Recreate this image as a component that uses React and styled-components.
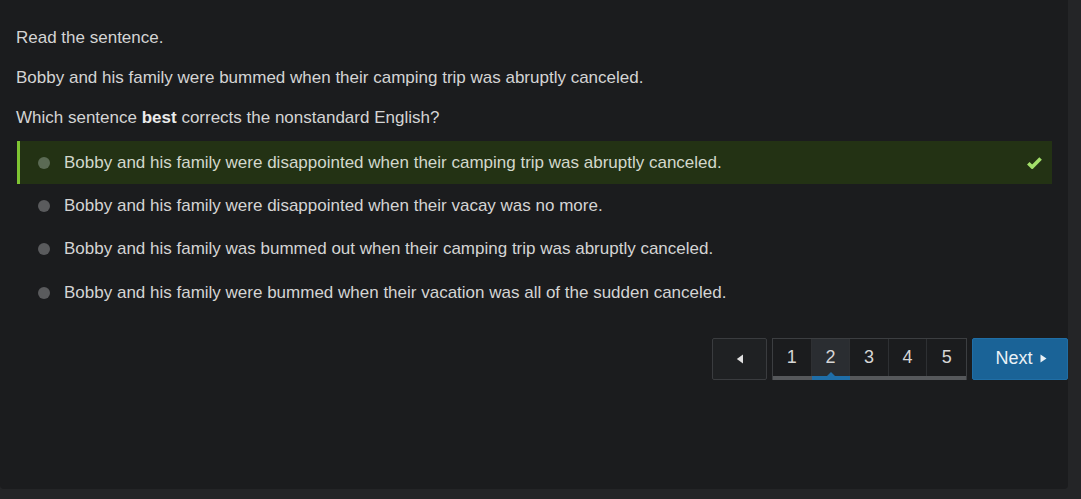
import React from "react";
import styled, { createGlobalStyle } from "styled-components";

const Global = createGlobalStyle`
  html, body { margin: 0; padding: 0; background: #242527; }
  body { font-family: "Liberation Sans", Arial, sans-serif; }
`;

const Panel = styled.div`
  width: 1068px;
  height: 489px;
  box-sizing: border-box;
  background: #1b1c1e;
  border-radius: 0 0 4px 4px;
  padding: 26px 16px 0 16px;
  color: #d4d4d4;
  font-size: 17px;
`;

const Prompt = styled.div`
  display: flex;
  flex-direction: column;
  gap: 16px;
`;

const Para = styled.p`
  margin: 0;
  line-height: 24px;
  b { color: #ececec; font-weight: 700; }
`;

const Options = styled.div`
  margin: 11px 0 0 1px;
  display: flex;
  flex-direction: column;
`;

const Option = styled.div`
  display: flex;
  align-items: center;
  height: ${p => (p.$first ? 43 : 43.5)}px;
  box-sizing: border-box;
  padding: 0 10px 0 18px;
  background: ${p => (p.$selected ? "#233214" : "transparent")};
  border-left: 3px solid ${p => (p.$selected ? "#7fc433" : "transparent")};
  color: ${p => (p.$selected ? "#d2d8cc" : "#d4d4d4")};
`;

const Dot = styled.span`
  width: 12px;
  height: 12px;
  border-radius: 50%;
  background: ${p => (p.$selected ? "#5b6a54" : "#5a5b5d")};
  margin-right: 14px;
  flex: none;
`;

const OptionText = styled.span`
  flex: 1;
  line-height: 20px;
`;

const Check = styled.svg`
  width: 15px;
  height: 12px;
  flex: none;
`;

const Pager = styled.div`
  display: flex;
  justify-content: flex-end;
  align-items: flex-start;
  margin: 23px -16px 0 0;
  gap: 5px;
`;

const PrevBtn = styled.button`
  width: 55px;
  height: 42px;
  box-sizing: border-box;
  background: #1f2123;
  border: 1px solid #3a3c3f;
  border-radius: 2px;
  display: flex;
  align-items: center;
  justify-content: center;
  padding: 0;
`;

const Group = styled.div`
  position: relative;
  display: flex;
  height: 42px;
  box-sizing: border-box;
  border: 1px solid #3c3e41;
  border-bottom: none;
  background: #1b1c1e;
`;

const Page = styled.div`
  position: relative;
  width: 38.6px;
  height: 37px;
  display: flex;
  align-items: center;
  justify-content: center;
  font-size: 18px;
  color: #d6d6d6;
  background: ${p => (p.$active ? "#2a2d31" : "transparent")};
  border-right: ${p => (p.$last ? "none" : "1px solid #2e3033")};
  box-sizing: border-box;
`;

const Track = styled.div`
  position: absolute;
  left: 0;
  right: 0;
  bottom: 0;
  height: 4px;
  background: #56585b;
`;

const TrackFill = styled.div`
  position: absolute;
  top: 0;
  height: 4px;
  background: #1f6ea8;
`;

const Caret = styled.div`
  position: absolute;
  top: -4px;
  width: 0;
  height: 0;
  border-left: 4px solid transparent;
  border-right: 4px solid transparent;
  border-bottom: 4px solid #1f6ea8;
`;

const NextBtn = styled.button`
  width: 96px;
  height: 42px;
  background: #1a6397;
  border: 1px solid #1f6ea6;
  border-radius: 2px;
  color: #eaf1f6;
  font-family: "Liberation Sans", Arial, sans-serif;
  font-size: 18px;
  display: flex;
  align-items: center;
  justify-content: center;
  gap: 7px;
  padding: 0 0 0 2px;
`;

const options = [
  "Bobby and his family were disappointed when their camping trip was abruptly canceled.",
  "Bobby and his family were disappointed when their vacay was no more.",
  "Bobby and his family was bummed out when their camping trip was abruptly canceled.",
  "Bobby and his family were bummed when their vacation was all of the sudden canceled.",
];

export default function App() {
  const active = 1;
  const cellW = 38.6;
  return (
    <>
      <Global />
      <Panel>
        <Prompt>
          <Para>Read the sentence.</Para>
          <Para>Bobby and his family were bummed when their camping trip was abruptly canceled.</Para>
          <Para>Which sentence <b>best</b> corrects the nonstandard English?</Para>
        </Prompt>
        <Options>
          {options.map((o, i) => (
            <Option key={i} $selected={i === 0} $first={i === 0}>
              <Dot $selected={i === 0} />
              <OptionText>{o}</OptionText>
              {i === 0 && (
                <Check viewBox="0 0 15 12">
                  <path d="M1.3 6.2 L5.2 10 L13.6 1.6" stroke="#a3e06a" strokeWidth="3.6" fill="none" strokeLinejoin="miter" />
                </Check>
              )}
            </Option>
          ))}
        </Options>
        <Pager>
          <PrevBtn aria-label="Previous">
            <svg width="8" height="10" viewBox="0 0 8 10">
              <path d="M7 0.5 L7 9.5 L0.8 5 Z" fill="#e0e0e0" />
            </svg>
          </PrevBtn>
          <Group>
            {[1, 2, 3, 4, 5].map((n, i) => (
              <Page key={n} $active={i === active} $last={i === 4}>{n}</Page>
            ))}
            <Track>
              <TrackFill style={{ left: active * cellW, width: cellW }} />
              <Caret style={{ left: active * cellW + cellW / 2 - 4 }} />
            </Track>
          </Group>
          <NextBtn>
            Next
            <svg width="7" height="9" viewBox="0 0 7 9">
              <path d="M0.5 0.5 L0.5 8.5 L6.5 4.5 Z" fill="#eaf1f6" />
            </svg>
          </NextBtn>
        </Pager>
      </Panel>
    </>
  );
}
